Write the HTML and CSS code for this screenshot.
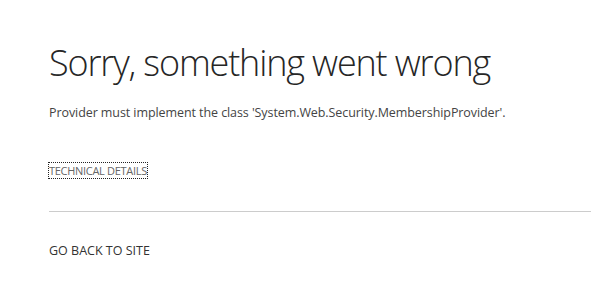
FILE: index.html
```html
<!DOCTYPE html>
<html lang="en">
<head>
    <meta charset="UTF-8">
    <title>Error</title>
    <link rel="stylesheet" href="styles.css">
</head>
<body>
<div class="error-page">
    <h1 class="error-title">Sorry, something went wrong</h1>
    <p class="error-msg">Provider must implement the class 'System.Web.Security.MembershipProvider'.</p>
    <div class="details">
        <a href="#" class="details-link">TECHNICAL DETAILS</a>
    </div>
    <hr class="sep">
    <div class="back">
        <a href="#" class="back-link">GO BACK TO SITE</a>
    </div>
</div>
</body>
</html>
```

FILE: styles.css
```css
*{
    margin: 0;
    padding: 0;
    box-sizing: border-box;
}
body{
    font-family: "Segoe UI", "Open Sans", "Liberation Sans", sans-serif;
    background-color: #fff;
    color: #444;
}
.error-page{
    padding: 39px 0 0 49px;
}
.error-title{
    font-size: 36px;
    font-weight: 300;
    color: #262626;
    line-height: 48px;
    letter-spacing: -1.15px;
}
.error-msg{
    margin-top: 17px;
    font-size: 12.5px;
    line-height: 18px;
    color: #444;
    letter-spacing: -0.08px;
}
.details{
    margin-top: 40px;
    line-height: 14px;
}
.details-link{
    font-size: 11px;
    color: #666;
    text-decoration: none;
    outline: 1px dotted #222;
    letter-spacing: -0.3px;
}
.sep{
    border: none;
    border-top: 1px solid #ccc;
    margin-top: 33px;
}
.back{
    margin-top: 26px;
}
.back-link{
    font-size: 12.5px;
    color: #333;
    text-decoration: none;
}
```
